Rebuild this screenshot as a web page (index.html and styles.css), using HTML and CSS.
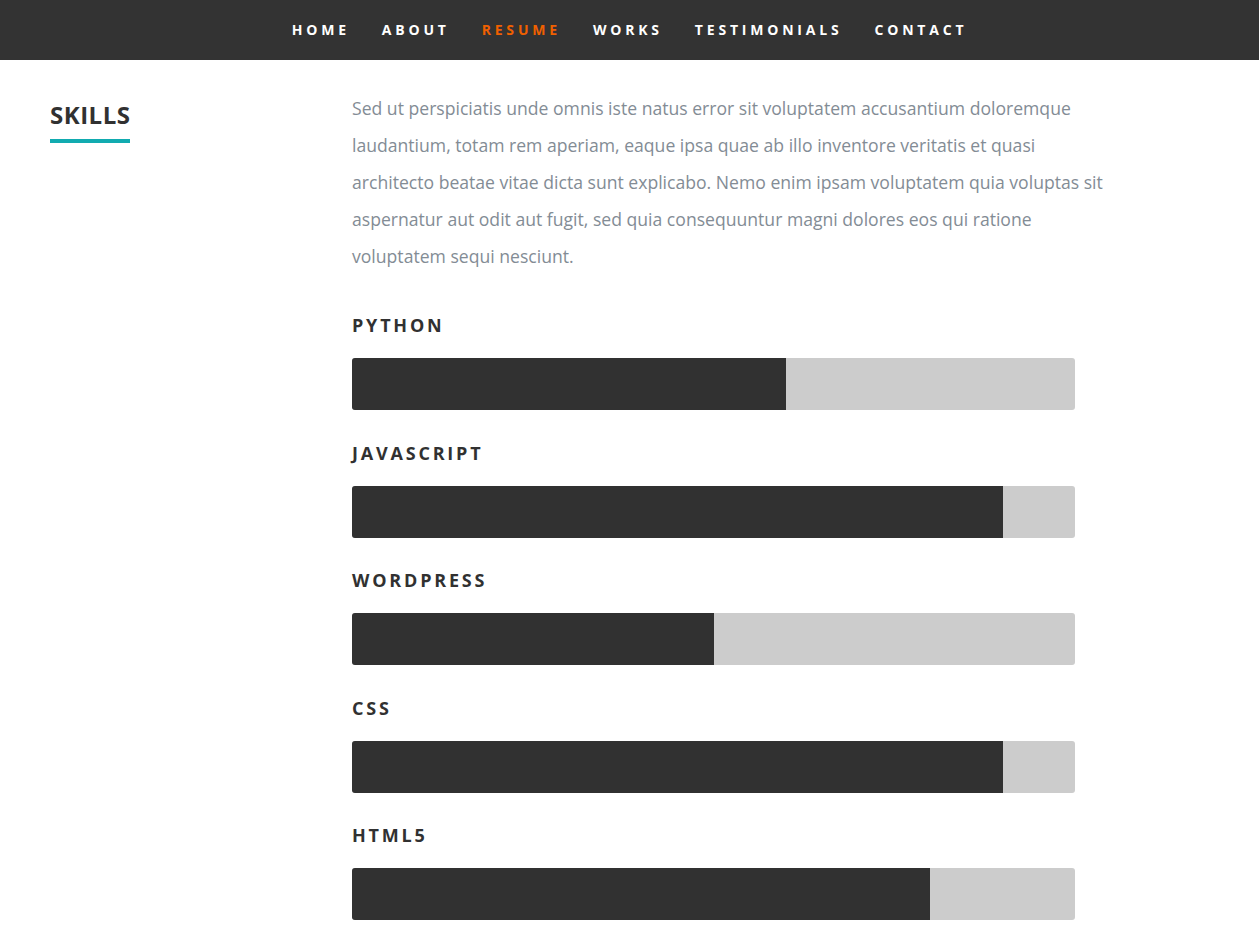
FILE: index.html
```html
<!DOCTYPE html>
<html lang="en">
<head>
<meta charset="utf-8">
<title>Resume - Skills</title>
<link rel="stylesheet" href="styles.css">
</head>
<body>
<nav class="nav">
  <ul class="nav-list">
    <li><a href="#">Home</a></li>
    <li><a href="#">About</a></li>
    <li><a href="#" class="current">Resume</a></li>
    <li><a href="#">Works</a></li>
    <li><a href="#">Testimonials</a></li>
    <li><a href="#">Contact</a></li>
  </ul>
</nav>
<section class="skills">
  <div class="side">
    <h1 class="heading"><span>Skills</span></h1>
  </div>
  <div class="main">
    <p class="intro">Sed ut perspiciatis unde omnis iste natus error sit voluptatem accusantium doloremque laudantium, totam rem aperiam, eaque ipsa quae ab illo inventore veritatis et quasi architecto beatae vitae dicta sunt explicabo. Nemo enim ipsam voluptatem quia voluptas sit aspernatur aut odit aut fugit, sed quia consequuntur magni dolores eos qui ratione voluptatem sequi nesciunt.</p>
    <ul class="bars">
      <li class="skill"><em class="label">Python</em><div class="bar"><span class="fill" style="width:60%"></span></div></li>
      <li class="skill"><em class="label">JavaScript</em><div class="bar"><span class="fill" style="width:90%"></span></div></li>
      <li class="skill"><em class="label">WordPress</em><div class="bar"><span class="fill" style="width:50%"></span></div></li>
      <li class="skill"><em class="label">CSS</em><div class="bar"><span class="fill" style="width:90%"></span></div></li>
      <li class="skill"><em class="label">HTML5</em><div class="bar"><span class="fill" style="width:80%"></span></div></li>
    </ul>
  </div>
</section>
</body>
</html>
```
FILE: styles.css
```css
* { box-sizing: border-box; }
html, body { margin: 0; padding: 0; background: #fff; }
body { font-family: "Open Sans", "Noto Sans", sans-serif; }

.nav { height: 60px; background: #333; display: flex; justify-content: center; align-items: center; }
.nav-list { list-style: none; margin: 0; padding: 0; display: flex; }
.nav-list a {
  display: block; padding: 0 16px; color: #fff; text-decoration: none;
  font-weight: 700; font-size: 14px; letter-spacing: 3.8px; text-transform: uppercase; line-height: 20px;
}
.nav-list a.current { color: #F06000; }

.skills { display: flex; padding: 30px 0 0 50px; }
.side { width: 302px; flex: none; }
.heading { margin: 9.5px 0 0; font-size: 24px; font-weight: 700; letter-spacing: 0.5px; color: #313131; text-transform: uppercase; line-height: 30px; }
.heading span { display: inline-block; border-bottom: 4px solid #11ABB0; padding-bottom: 9.5px; }

.main { width: 763px; flex: none; }
.intro { margin: 0; font-size: 17.6px; line-height: 37px; color: #838C95; }
.bars { list-style: none; margin: 38px 0 0; padding: 0; width: 723px; }
.skill { display: flex; flex-direction: column; }
.label { font-style: normal; font-weight: 700; font-size: 18px; letter-spacing: 2.8px; text-transform: uppercase; color: #313131; line-height: 24px; margin-bottom: 21px; }
.bar { height: 52px; background: #ccc; border-radius: 3px; overflow: hidden; margin-bottom: 30.5px; }
.fill { display: block; height: 100%; background: #313131; }
```
